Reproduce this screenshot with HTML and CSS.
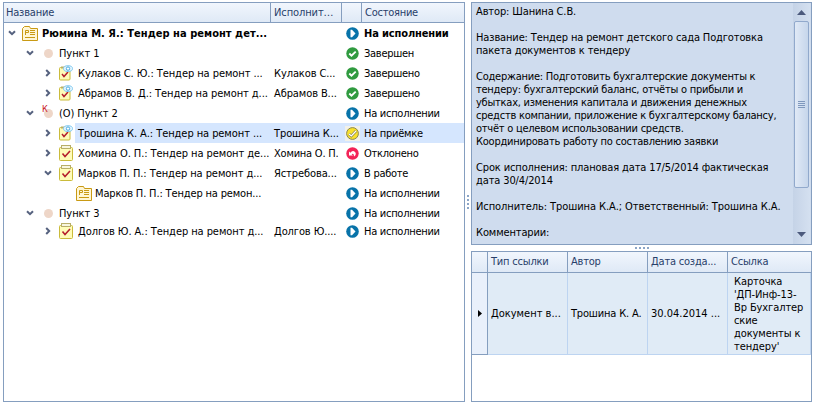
FILE: index.html
```
<!DOCTYPE html>
<html lang="ru">
<head>
<meta charset="utf-8">
<title>Ход исполнения</title>
<link rel="stylesheet" href="styles.css">
</head>
<body>
<svg width="0" height="0" class="defs">
  <defs>
    <symbol id="down" viewBox="0 0 8 8"><path d="M1 2.200 4 5.200 7 2.200" fill="none" stroke="#56627f" stroke-width="2"/></symbol>
    <symbol id="right" viewBox="0 0 8 8"><path d="M2.200 1 5.200 4 2.200 7" fill="none" stroke="#56627f" stroke-width="2"/></symbol>
    <symbol id="card" viewBox="0 0 16 16"><path d="M.5 15.500V3.500L2.500 1.500H7.500L8.500 3.500H15.500V15.500Z" fill="#fff6d5" stroke="#c99a14"/><path d="M3.500 10V5.500H6.500V7.500H3.500M8 5.500H13M8 7.500H13M8 9.500H13M3 12.500H13" fill="none" stroke="#c99a14"/></symbol>
    <symbol id="task" viewBox="0 0 14 16"><rect x=".5" y="2.500" width="13" height="13" rx="1" fill="#fffcb8" stroke="#cabb3b"/><rect x="2.500" y=".5" width="9" height="3" fill="#f7f5df" stroke="#b8ae68"/><path d="M3.500 8.500 6 11.500 11 6" fill="none" stroke="#b51f2d" stroke-width="1.600"/></symbol>
    <symbol id="seen" viewBox="0 0 14 16"><rect x=".5" y="2.500" width="10.500" height="12.500" rx="1" fill="#fffcb8" stroke="#cabb3b"/><path d="M2 2.500H7" stroke="#b8ae68" stroke-width="2"/><path d="M3 9 5 11.500 9 7" fill="none" stroke="#b51f2d" stroke-width="1.500"/><ellipse cx="9" cy="3.600" rx="4.500" ry="2.900" fill="#e2f5ff" stroke="#83c9ee"/><circle cx="9" cy="3.600" r="1.700" fill="#fff" stroke="#4bacdf"/></symbol>
    <symbol id="play" viewBox="0 0 13 13"><circle cx="6.500" cy="6.500" r="6.300" fill="#0873a9"/><path d="M4.500 2.700H6L9.500 6.500 6 10.300H4.500Z" fill="#fff"/></symbol>
    <symbol id="done" viewBox="0 0 13 13"><circle cx="6.500" cy="6.500" r="6.200" fill="#309b40"/><path d="M3.300 6.500 5.500 8.600 9.700 4.600" fill="none" stroke="#fff" stroke-width="1.900"/></symbol>
    <symbol id="accept" viewBox="0 0 15 15"><path d="M0 0H15V15H0Z" fill="#f2f1e8"/><circle cx="7.500" cy="7.500" r="5.900" fill="#f9e12b" stroke="#8a8750"/><path d="M4 8 6.300 10 11 5" fill="none" stroke="#8a8750" stroke-width="2.600"/><path d="M4 8 6.300 10 11 5" fill="none" stroke="#fff" stroke-width="1.200"/></symbol>
    <symbol id="reject" viewBox="0 0 13 13"><circle cx="6.500" cy="6.500" r="6.200" fill="#f32458"/><path d="M3 4.500V8.500H7L5.600 7.300Q8 5.500 8 9.500 11 7 9 4.900 6.500 3 4.300 5.700Z" fill="#fff"/></symbol>
  </defs>
</svg>
<main class="window">
  <section class="tree">
    <div class="row head"><div>Название</div><div>Исполнит…</div><div></div><div>Состояние</div></div>
    <div class="row bold"><div class="name l0"><svg class="exp"><use href="#down"/></svg><svg class="card"><use href="#card"/></svg><span>Рюмина М. Я.: Тендер на ремонт дет...</span></div><div></div><div class="icon"><svg><use href="#play"/></svg></div><div>На исполнении</div></div>
    <div class="row"><div class="name l1"><svg class="exp"><use href="#down"/></svg><i class="dot"></i><span>Пункт 1</span></div><div></div><div class="icon"><svg><use href="#done"/></svg></div><div>Завершен</div></div>
    <div class="row"><div class="name l2"><svg class="exp"><use href="#right"/></svg><svg class="task"><use href="#seen"/></svg><span>Кулаков С. Ю.: Тендер на ремонт ...</span></div><div>Кулаков С...</div><div class="icon"><svg><use href="#done"/></svg></div><div>Завершено</div></div>
    <div class="row"><div class="name l2"><svg class="exp"><use href="#right"/></svg><svg class="task"><use href="#seen"/></svg><span>Абрамов В. Д.: Тендер на ремонт д...</span></div><div>Абрамов В...</div><div class="icon"><svg><use href="#done"/></svg></div><div>Завершено</div></div>
    <div class="row"><div class="name l1"><svg class="exp"><use href="#down"/></svg><i class="dot control"><b>К</b></i><span>(О) Пункт 2</span></div><div></div><div class="icon"><svg><use href="#play"/></svg></div><div>На исполнении</div></div>
    <div class="row selected"><div class="name l2"><svg class="exp"><use href="#right"/></svg><svg class="task"><use href="#seen"/></svg><span>Трошина К. А.: Тендер на ремонт ...</span></div><div>Трошина К...</div><div class="icon"><svg class="accept"><use href="#accept"/></svg></div><div>На приёмке</div></div>
    <div class="row"><div class="name l2"><svg class="exp"><use href="#right"/></svg><svg class="task"><use href="#task"/></svg><span>Хомина О. П.: Тендер на ремонт де...</span></div><div class="full">Хомина О. П.</div><div class="icon"><svg><use href="#reject"/></svg></div><div>Отклонено</div></div>
    <div class="row"><div class="name l2"><svg class="exp"><use href="#down"/></svg><svg class="task"><use href="#task"/></svg><span>Марков П. П.: Тендер на ремонт д...</span></div><div>Ястребова...</div><div class="icon"><svg><use href="#play"/></svg></div><div>В работе</div></div>
    <div class="row"><div class="name l3"><svg class="card"><use href="#card"/></svg><span>Марков П. П.: Тендер на ремон...</span></div><div></div><div class="icon"><svg><use href="#play"/></svg></div><div>На исполнении</div></div>
    <div class="row short"><div class="name l1"><svg class="exp"><use href="#down"/></svg><i class="dot"></i><span>Пункт 3</span></div><div></div><div class="icon"><svg><use href="#play"/></svg></div><div>На исполнении</div></div>
    <div class="row"><div class="name l2"><svg class="exp"><use href="#right"/></svg><svg class="task"><use href="#task"/></svg><span>Долгов Ю. А.: Тендер на ремонт д...</span></div><div>Долгов Ю....</div><div class="icon"><svg><use href="#play"/></svg></div><div>На исполнении</div></div>
  </section>
  <div class="splitter vertical"><i></i><i></i><i></i><i></i></div>
  <div class="side">
    <section class="details">
      <div class="text">
        <p>Автор: Шанина С.В.</p>
        <p>Название: Тендер на ремонт детского сада Подготовка<br>пакета документов к тендеру</p>
        <p class="tight">Содержание: Подготовить бухгалтерские документы к<br>тендеру: бухгалтерский баланс, отчёты о прибыли и<br>убытках, изменения капитала и движения денежных<br>средств компании, приложение к бухгалтерскому балансу,<br>отчёт о целевом использовании средств.<br>Координировать работу по составлению заявки</p>
        <p>Срок исполнения: плановая дата 17/5/2014 фактическая<br>дата 30/4/2014</p>
        <p class="wide">Исполнитель: Трошина К.А.; Ответственный: Трошина К.А.</p>
        <p>Комментарии:</p>
      </div>
      <div class="scrollbar">
        <svg class="arrow" viewBox="0 0 9 5"><path d="M0 5 4.500 0 9 5Z" fill="#4c5a7d"/></svg>
        <div class="thumb"><i></i><i></i><i></i><i></i></div>
        <svg class="arrow" viewBox="0 0 9 5"><path d="M0 0 4.500 5 9 0Z" fill="#4c5a7d"/></svg>
      </div>
    </section>
    <div class="splitter horizontal"><i></i><i></i><i></i><i></i></div>
    <section class="links">
      <div class="link-row link-head"><div></div><div>Тип ссылки</div><div>Автор</div><div>Дата созда...</div><div>Ссылка</div></div>
      <div class="link-row link-body"><div class="marker"><svg viewBox="0 0 4 7"><path d="M0 0 4 3.500 0 7Z"/></svg></div><div>Документ в...</div><div class="author">Трошина К. А.</div><div>30.04.2014 ...</div><div class="ref">Карточка<br>'ДП-Инф-13-<br>Вр Бухгалтер<br>ские<br>документы к<br>тендеру'</div></div>
    </section>
  </div>
</main>
</body>
</html>
```
FILE: styles.css
```
* { box-sizing: border-box; }
body { margin: 0; background: #fff; color: #000; font: 11px/13px "DejaVu Sans Condensed", "DejaVu Sans", sans-serif; font-stretch: condensed; overflow: hidden; white-space: nowrap; }
svg { display: block; flex: none; }
.defs { position: absolute; }
.window { width: 813px; height: 404px; padding: 2px 1px 2px 3px; display: flex; }
.tree { width: 462px; height: 400px; border: 1px solid #859ebf; }
.row { display: grid; grid-template-columns: 267px 71px 20px 102px; height: 20px; align-items: center; }
.row > div { padding-left: 3px; letter-spacing: -.1px; }
.row > .full { letter-spacing: -.22px; }
.row > .name { display: flex; align-items: center; height: 20px; padding-left: 4px; letter-spacing: -.07px; }
.bold > .name { letter-spacing: .04px; }
.row > .icon { padding-left: 4px; }
.row > div:last-child { padding-left: 2px; letter-spacing: -.27px; }
.row.bold > div:last-child { letter-spacing: -.13px; }
.icon svg { width: 13px; height: 13px; }
.icon .accept { width: 15px; height: 15px; margin-left: -1px; }
.head { color: #28406a; background: linear-gradient(#f1f6fd, #dfe9f6); border-bottom: 1px solid #859ebf; }
.head > div { height: 19px; line-height: 19px; border-right: 1px solid #859ebf; }
.row.head > div:first-child { padding-left: 2px; letter-spacing: -.2px; }
.row.head > div:last-child { border-right: 0; padding-left: 3px; letter-spacing: -.25px; }
.bold { font-weight: bold; }
.short { height: 18px; }
.exp { width: 8px; height: 8px; }
.card { width: 16px; height: 16px; margin-right: 4px; }
.l0 .exp { margin-right: 6px; }
.row > .l1 { padding-left: 22px; }
.l1 .exp { margin-right: 10px; }
.row > .l2 { padding-left: 40px; }
.l2 .exp { margin-right: 7px; }
.row > .l3 { padding-left: 72px; letter-spacing: -.15px; }
.l3 .card { margin-right: 3px; }
.task { width: 14px; height: 16px; margin-right: 5px; }
.dot { width: 9px; height: 9px; margin-right: 6px; border-radius: 50%; background: #eed6c8; position: relative; }
.control b { position: absolute; left: -2px; top: -5px; color: #c81420; font-weight: normal; font-style: normal; font-size: 9px; line-height: 11px; }
.selected { background: linear-gradient(90deg, #fff 71px, #d5e6fe 71px); }
.splitter { display: flex; align-items: center; justify-content: center; gap: 2px; }
.splitter i { width: 2px; height: 2px; background: #8ba5c7; }
.vertical { width: 6px; flex-direction: column; }
.side { width: 341px; }
.details { display: flex; height: 243px; border: 1px solid #859ebf; background: #cfdcee; }
.text { width: 321px; padding: 2px 0 0 4px; }
p { margin: 0 0 13px; letter-spacing: -.13px; }
.tight { letter-spacing: -.24px; }
.wide { letter-spacing: -.08px; }
.scrollbar { width: 17px; padding: 7px 1px; display: flex; flex-direction: column; align-items: center; justify-content: space-between; background: linear-gradient(90deg, #c5d3e7, #d4e0f0); }
.arrow { width: 9px; height: 5px; }
.thumb { width: 15px; height: 167px; margin: 6px 0 auto; border: 1px solid #91a9cc; border-radius: 2px; background: linear-gradient(90deg, #e0e9f6, #c6d6eb); display: flex; flex-direction: column; align-items: center; justify-content: center; gap: 1px; }
.thumb i { width: 7px; height: 1px; background: #7f98bd; }
.horizontal { height: 6px; }
.links { height: 151px; border: 1px solid #859ebf; }
.link-row { display: grid; grid-template-columns: 16px 80px 80px 80px 83px; }
.link-row > div { padding-left: 3px; }
.link-head { height: 21px; line-height: 20px; color: #28406a; letter-spacing: -.2px; background: linear-gradient(#f1f6fd, #dfe9f6); border-bottom: 1px solid #859ebf; }
.link-head > div:not(:last-child) { border-right: 1px solid #859ebf; }
.link-body { height: 82px; background: #e0ebf6; }
.link-body > div { display: flex; align-items: center; border-right: 1px solid #bdd4f1; border-bottom: 1px solid #bdd4f1; }
.link-body > .marker { padding-left: 6px; border-color: #859ebf; background: #e9f0fb; }
.link-body > .author { letter-spacing: -.17px; }
.marker svg { width: 4px; height: 7px; }
.link-body > .ref { display: block; padding: 2px 0 0 6px; letter-spacing: -.1px; }
```
